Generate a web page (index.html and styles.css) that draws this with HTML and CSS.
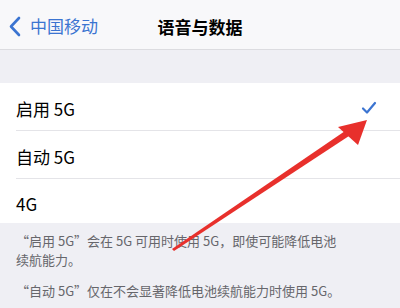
FILE: index.html
```html
<!DOCTYPE html>
<html lang="zh-CN">
<head>
    <meta charset="UTF-8">
    <meta name="viewport" content="width=device-width, initial-scale=1.0">
    <title>语音与数据</title>
    <link rel="stylesheet" href="styles.css">
</head>
<body>
    <div class="navbar">
        <div class="back">
            <svg class="chevron" width="13" height="21" viewBox="0 0 13 21">
                <path d="M11 2 L3 10.5 L11 19" fill="none" stroke="#3b74d1" stroke-width="2.6" stroke-linecap="round" stroke-linejoin="round"/>
            </svg>
            <span>中国移动</span>
        </div>
        <div class="title">语音与数据</div>
    </div>

    <div class="list">
        <div class="row">
            <span>启用 5G</span>
            <svg class="check" width="16" height="14" viewBox="0 0 16 14">
                <path d="M2 7.5 L6 11.5 L14 2" fill="none" stroke="#3b74d1" stroke-width="2.2" stroke-linecap="round" stroke-linejoin="round"/>
            </svg>
        </div>
        <div class="row">
            <span>自动 5G</span>
        </div>
        <div class="row last">
            <span>4G</span>
        </div>
    </div>

    <div class="notes">
        <p>“启用 5G”会在 5G 可用时使用 5G，即使可能降低电池<br>续航能力。</p>
        <p>“自动 5G”仅在不会显著降低电池续航能力时使用 5G。</p>
    </div>

    <!-- red annotation arrow drawn over the screenshot -->
    <svg class="arrow" width="400" height="308" viewBox="0 0 400 308">
        <polygon points="172,249 174,251 352,134 348,129" fill="#e8302c"/>
        <polygon points="367,120 338,127 358,145" fill="#e8302c"/>
    </svg>
</body>
</html>
```

FILE: styles.css
```css
body {
    margin: 0;
    padding: 0;
    width: 400px;
    height: 308px;
    overflow: hidden;
    position: relative;
    background-color: #efeff4;
    font-family: "Noto Sans CJK SC", "Noto Sans", sans-serif;
    color: #000;
}
.navbar {
    height: 49px;
    background-color: #f8f8fa;
    border-bottom: 1px solid #dcdce0;
    display: flex;
    align-items: center;
    justify-content: center;
    position: relative;
}
.back {
    position: absolute;
    left: 8px;
    top: 15px;
    display: flex;
    align-items: center;
    gap: 9px;
    color: #3b74d1;
    font-size: 17px;
    line-height: 22px;
}
.chevron {
    display: block;
}
.title {
    font-size: 17px;
    font-weight: 600;
    margin-top: 3px;
}
.list {
    margin-top: 33px;
    background-color: #fff;
    padding-left: 16px;
}
.row {
    height: 47px;
    display: flex;
    align-items: center;
    justify-content: space-between;
    padding-right: 23px;
    border-bottom: 1px solid #e4e4e8;
    font-size: 17px;
}
.row span {
    margin-top: 4px;
}
.row.last {
    height: 44px;
    border-bottom: none;
}
.check {
    margin-top: 2px;
}
.notes {
    padding: 8px 16px 0;
}
.notes p {
    margin: 0 0 12px;
    font-size: 13px;
    line-height: 19px;
    color: #66666b;
}
.arrow {
    position: absolute;
    left: 0;
    top: 0;
}
```
